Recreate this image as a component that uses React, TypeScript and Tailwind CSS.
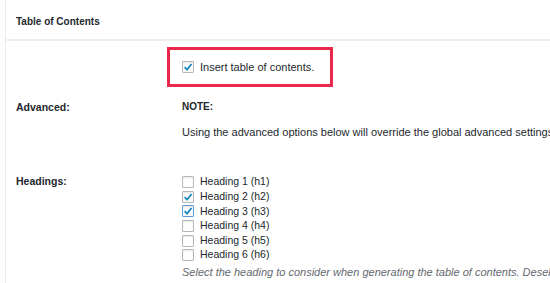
import React from "react";

const Checkbox = ({ checked = false, focused = false }: { checked?: boolean; focused?: boolean }) => (
  <span
    className={
      "flex h-[12px] w-[12px] shrink-0 items-center justify-center rounded-[1px] border bg-white shadow-[inset_0_1px_2px_rgba(0,0,0,0.1)] " +
      (focused ? "border-[#5b9dd9] shadow-[0_0_2px_rgba(30,140,190,0.8)]" : "border-[#b4b9be]")
    }
  >
    {checked && (
      <svg width="10" height="10" viewBox="0 0 10 10">
        <path d="M1.6 5.2 L4 7.6 L8.6 2" fill="none" stroke="#1e8cbe" strokeWidth="1.9" />
      </svg>
    )}
  </span>
);

const headings = [
  { label: "Heading 1 (h1)", checked: false },
  { label: "Heading 2 (h2)", checked: true },
  { label: "Heading 3 (h3)", checked: true, focused: true },
  { label: "Heading 4 (h4)", checked: false },
  { label: "Heading 5 (h5)", checked: false },
  { label: "Heading 6 (h6)", checked: false },
];

export default function App() {
  return (
    <div
      className="h-[283px] w-[550px] overflow-hidden bg-white text-[#23282d]"
      style={{ fontFamily: '"Liberation Sans", Arial, sans-serif' }}
    >
      <div className="ml-[5px] h-full border-l border-[#ececec]">
        {/* panel header */}
        <div className="flex h-[41px] items-center border-b-2 border-[#eeeeee] pl-[10px] pt-[4px] text-[10px] font-bold">
          Table of Contents
        </div>

        {/* highlighted option */}
        <div className="pt-[6px]">
          <div className="ml-[161px] flex h-[40px] w-[166px] items-center gap-[6px] border-[3px] border-[#e8294c] pl-[12px] text-[11px]">
            <Checkbox checked />
            <span>Insert table of contents.</span>
          </div>
        </div>

        {/* advanced */}
        <div className="mt-[13px] flex">
          <div className="w-[176px] shrink-0 pl-[10px] text-[10.5px] font-bold leading-[14px]">Advanced:</div>
          <div className="whitespace-nowrap text-[11px] leading-[14px]">
            <div className="text-[10px] font-bold">NOTE:</div>
            <div className="mt-[11px]">Using the advanced options below will override the global advanced settings.</div>
          </div>
        </div>

        {/* headings */}
        <div className="mt-[33px] flex">
          <div className="w-[176px] shrink-0 pl-[10px] pt-[2px] text-[10.5px] font-bold leading-[14px]">Headings:</div>
          <div className="whitespace-nowrap pt-[3px]">
            {headings.map((h) => (
              <label key={h.label} className="flex h-[14.6px] items-center gap-[6px] text-[10.5px]">
                <Checkbox checked={h.checked} focused={h.focused} />
                <span>{h.label}</span>
              </label>
            ))}
            <p className="mt-[2px] text-[11px] italic leading-[14px] text-[#646970]">
              Select the heading to consider when generating the table of contents. Deselect a heading to exclude it.
            </p>
          </div>
        </div>
      </div>
    </div>
  );
}
